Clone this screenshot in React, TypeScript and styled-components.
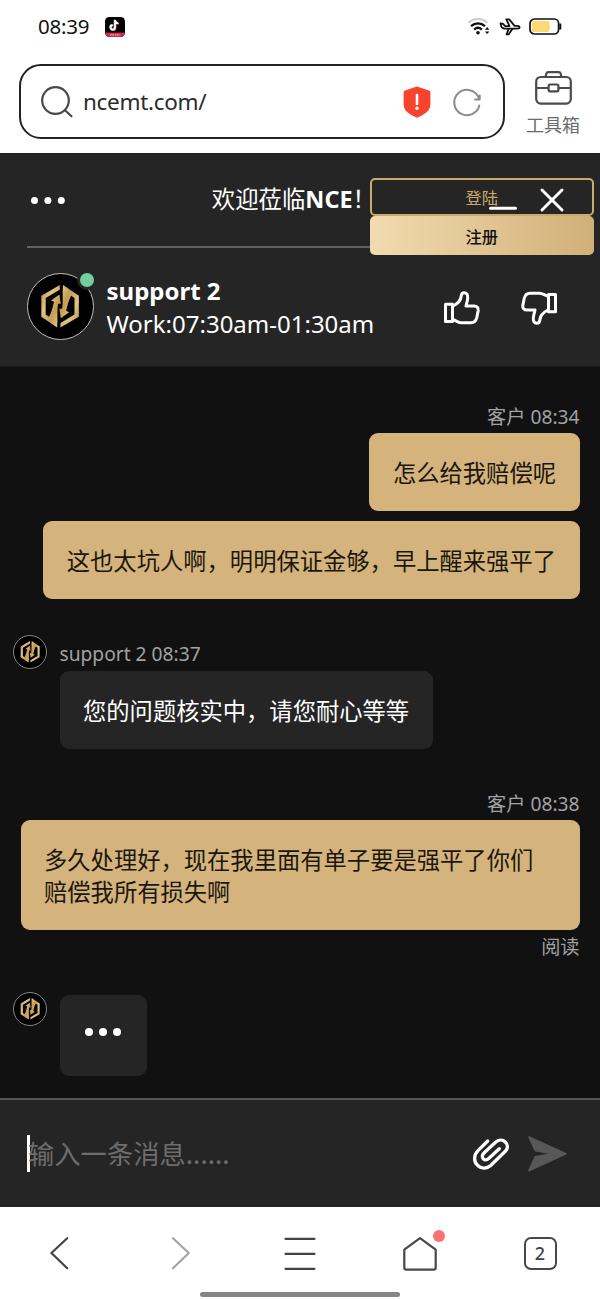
import React from "react";
import styled, { createGlobalStyle } from "styled-components";

const GOLD = "#d4b47c";
const PANEL = "#252525";

const Global = createGlobalStyle`
  * { box-sizing: border-box; }
  body { margin: 0; background: #fff; font-family: "Noto Sans", "Noto Sans CJK SC", sans-serif; }
  svg { display: block; flex: none; overflow: visible; }
`;

const Page = styled.div`
  width: 600px;
  height: 1300px;
  display: flex;
  flex-direction: column;
  background: #fff;
  overflow: hidden;
`;

const StatusBar = styled.div`
  height: 53px;
  padding: 0 38px;
  display: flex;
  align-items: center;
  justify-content: space-between;
`;
const StatusGroup = styled.div<{ $gap: number }>`
  display: flex;
  align-items: center;
  gap: ${(p) => p.$gap}px;
`;
const Clock = styled.span`
  width: 52px;
  font: 400 20.5px/53px "Noto Sans", sans-serif;
  letter-spacing: -0.2px;
  color: #111;
  white-space: nowrap;
`;

const BrowserBar = styled.div`
  height: 101px;
  padding: 11px 19px 15px;
  display: flex;
  align-items: flex-start;
  border-bottom: 1px solid #202020;
`;
const AddressBox = styled.div`
  width: 486px;
  height: 75px;
  padding: 0 22px 0 20px;
  border: 2.5px solid #232323;
  border-radius: 22px;
  display: flex;
  align-items: center;
`;
const Url = styled.span`
  flex: 1;
  margin-left: 10px;
  font: 400 22.5px/70px "Noto Sans", sans-serif;
  letter-spacing: -0.3px;
  color: #2c2c2c;
`;
const Toolbox = styled.div`
  margin-left: 21px;
  width: 54px;
  padding-top: 7px;
  display: flex;
  flex-direction: column;
  align-items: center;
  gap: 6px;
  white-space: nowrap;
  font: 400 18px/26px "Noto Sans CJK SC", sans-serif;
  color: #6c6c6c;
`;

const ChatHeader = styled.header`
  position: relative;
  height: 213px;
  padding: 0 27px;
  background: ${PANEL};
  color: #fff;
  border-bottom: 1px solid #1a1a1a;
`;
const TitleRow = styled.div`
  height: 94px;
  padding-left: 4px;
  display: flex;
  align-items: center;
  border-bottom: 2px solid #626262;
`;
const Title = styled.div`
  margin-left: 147px;
  padding-bottom: 2px;
  font: 400 23.4px/32px "Noto Sans", "Noto Sans CJK SC", sans-serif;
  white-space: nowrap;
  b { font-weight: 700; }
`;
const AgentRow = styled.div`
  display: flex;
  align-items: center;
  padding: 25px 16px 0 0;
`;
const AvatarWrap = styled.div`
  position: relative;
  flex: none;
`;
const AvatarDisc = styled.div<{ $size: number }>`
  width: ${(p) => p.$size}px;
  height: ${(p) => p.$size}px;
  border: 1px solid ${(p) => (p.$size > 40 ? "#bdbdbd" : "#858585")};
  border-radius: 50%;
  background: #000;
  display: flex;
  align-items: center;
  justify-content: center;
  flex: none;
`;
const Online = styled.span`
  position: absolute;
  top: -3px;
  right: -3px;
  width: 20px;
  height: 20px;
  border: 3px solid ${PANEL};
  border-radius: 50%;
  background: #73cf9c;
`;
const AgentText = styled.div`
  flex: 1;
  margin-left: 12.5px;
  font-size: 24px;
  line-height: 33px;
  white-space: nowrap;
`;
const AgentName = styled.div`
  font-weight: 700;
`;
const Votes = styled.div`
  display: flex;
  gap: 41px;
  padding-top: 2px;
`;

const AuthPanel = styled.div`
  position: absolute;
  top: 24px;
  left: 370px;
  width: 223.5px;
  display: flex;
  flex-direction: column;
`;
const AuthButton = styled.button<{ $filled?: boolean }>`
  height: ${(p) => (p.$filled ? 39 : 38)}px;
  padding: 0;
  border: ${(p) => (p.$filled ? "0" : "2px solid #cbaa6c")};
  border-radius: 5px;
  background: ${(p) => (p.$filled ? "linear-gradient(90deg, #f2dbb0, #d0b078)" : PANEL)};
  color: ${(p) => (p.$filled ? "#111" : "#cbaa6c")};
  font: ${(p) => (p.$filled ? 500 : 400)} 16.3px/24px "Noto Sans CJK SC", sans-serif;
`;
const WindowControls = styled.div`
  position: absolute;
  top: 34px;
  left: 489px;
  display: flex;
  gap: 22px;
`;

const Conversation = styled.main`
  height: 732px;
  padding: 37px 20.5px 0 13px;
  background: #111;
  display: flex;
  flex-direction: column;
`;
const Outgoing = styled.section<{ $top?: number }>`
  display: flex;
  flex-direction: column;
  align-items: flex-end;
  margin-top: ${(p) => p.$top ?? 0}px;
`;
const Incoming = styled.section<{ $top: number }>`
  display: flex;
  align-items: flex-start;
  gap: 12.5px;
  margin-top: ${(p) => p.$top}px;
`;
const IncomingBody = styled.div`
  display: flex;
  flex-direction: column;
  align-items: flex-start;
`;
const Meta = styled.div<{ $h?: number; $pad?: number }>`
  height: ${(p) => p.$h ?? 29}px;
  padding-top: ${(p) => p.$pad ?? 0}px;
  line-height: 25px;
  font-size: 19.2px;
  color: #a2a2a2;
  white-space: nowrap;
`;
const Bubble = styled.div<{ $mine?: boolean; $gap?: number }>`
  margin-top: ${(p) => p.$gap ?? 0}px;
  padding: 23px 23.5px;
  border-radius: 9px;
  background: ${(p) => (p.$mine ? GOLD : PANEL)};
  color: ${(p) => (p.$mine ? "#1c170e" : "#fff")};
  font: 400 23.3px/32px "Noto Sans CJK SC", sans-serif;
  white-space: nowrap;
`;
const WideBubble = styled(Bubble)`
  width: 559px;
`;
const TypingBubble = styled(Bubble)`
  width: 87px;
  height: 81px;
  padding: 33px 25px;
`;

const Composer = styled.div`
  height: 109px;
  padding: 0 33px 0 27px;
  background: ${PANEL};
  border-top: 2px solid #555;
  display: flex;
  align-items: center;
`;
const Caret = styled.span`
  width: 3px;
  height: 37px;
  background: #fff;
`;
const Placeholder = styled.span`
  flex: 1;
  margin-left: -2px;
  padding-bottom: 1px;
  font: 400 26.3px/40px "Noto Sans CJK SC", sans-serif;
  color: #6d6d6d;
`;
const ComposerIcons = styled.div`
  display: flex;
  align-items: center;
  gap: 19px;
`;

const BottomNav = styled.nav`
  height: 93px;
  display: flex;
  flex-direction: column;
  align-items: center;
`;
const NavItems = styled.div`
  width: 600px;
  height: 85px;
  padding-top: 8px;
  display: grid;
  grid-template-columns: repeat(5, 120px);
  place-items: center;
`;
const NavItem = styled.div`
  position: relative;
`;
const Badge = styled.span`
  position: absolute;
  top: -7px;
  right: -8px;
  width: 12px;
  height: 12px;
  border-radius: 50%;
  background: #f97272;
`;
const TabCount = styled.div`
  width: 33px;
  height: 33px;
  border: 2px solid #484848;
  border-radius: 7px;
  font: 500 18px/29px "Noto Sans", sans-serif;
  text-align: center;
  color: #444;
`;
const HomeIndicator = styled.div`
  width: 200px;
  height: 5px;
  border-radius: 3px;
  background: #858585;
`;

const LOGO_HALF =
  "M59 0L4 32V95L51 127C54 100 50 80 54 56L62 56L58 28L33 46L42 50C38 66 34 84 27 95L17 88V39L59 14Z";

const Logo = ({ size }: { size: number }) => (
  <svg width={size} height={size * 1.06} viewBox="0 0 120 127">
    <defs>
      <linearGradient id="gold" x1="0" y1="0" x2="1" y2="1">
        <stop offset="0" stopColor="#b98d48" />
        <stop offset="0.35" stopColor="#e3c581" />
        <stop offset="0.65" stopColor="#c59c52" />
        <stop offset="1" stopColor="#edd493" />
      </linearGradient>
    </defs>
    <path d={LOGO_HALF} fill="url(#gold)" />
    <path d={LOGO_HALF} fill="url(#gold)" transform="rotate(180 60 63.5)" />
  </svg>
);

const Avatar = ({ size }: { size: number }) => (
  <AvatarDisc $size={size}>
    <Logo size={size * 0.6} />
  </AvatarDisc>
);

const Dots = ({ r, step }: { r: number; step: number }) => (
  <svg width={step * 2 + r * 2} height={r * 2} fill="#fff">
    {[0, 1, 2].map((i) => (
      <circle key={i} cx={r + i * step} cy={r} r={r} />
    ))}
  </svg>
);

const Thumb = ({ down }: { down?: boolean }) => (
  <svg width="36" height="34" viewBox="0 0 36 34" fill="none" stroke="#fff" strokeWidth="3" strokeLinejoin="round">
    <g transform={down ? "rotate(180 18 17)" : undefined}>
      <path d="M1.5 13.3H8.5V30.5H1.5Z" />
      <path d="M9 15C13 13 16.8 9.5 17.2 5C17.4 2.7 18.3 1.7 20 1.7C22.8 1.7 23.9 3.8 23.7 6.8C23.5 9.8 22.6 12.2 22 15H30C33 15 34.6 17 34.2 19.6L32.8 26.5C32 30 29.8 31.8 26.8 31.8H17.5C14 31.8 12.5 29.5 9 28.8" />
    </g>
  </svg>
);

const NOTE = "M10 3V10.4A2.2 2.2 0 1 1 7.8 8.2M10 3.2C10.2 5.2 11.5 6.3 13.4 6.4";

const MusicApp = () => (
  <svg width="20" height="20" viewBox="0 0 20 20">
    <clipPath id="app">
      <rect width="20" height="20" rx="4.5" />
    </clipPath>
    <g clipPath="url(#app)">
      <rect width="20" height="20" fill="#000" />
      <rect y="15.6" width="20" height="4.4" fill="#c9304c" />
      <path d="M5 17.8H15" stroke="#f3a9b5" strokeWidth="1.2" strokeDasharray="1.6 .8" />
    </g>
    <g fill="none" strokeWidth="1.8">
      <path d={NOTE} stroke="#42dcd6" transform="translate(-.5 -.3)" />
      <path d={NOTE} stroke="#ee3158" transform="translate(.6 .4)" />
      <path d={NOTE} stroke="#fff" />
    </g>
  </svg>
);

const Wifi = () => (
  <svg width="22" height="17" viewBox="0 0 22 17" fill="none" strokeWidth="2">
    <path d="M-.5 4.800C5-.2 13-.2 18.300 4.800" stroke="#ccc" />
    <path d="M2 8.200C6 4.400 12 4.400 16 8.200M5.200 11.600C7.500 9.400 10.500 9.400 12.800 11.600" stroke="#111" strokeWidth="2.300" />
    <circle cx="9" cy="14.700" r="1.800" fill="#111" />
    <path d="M15.800 11.700L18.100 9L20.400 11.700ZM15.800 13.400L18.100 16L20.400 13.400Z" fill="#111" />
  </svg>
);

const Flight = () => (
  <svg width="22" height="18" viewBox="0 0 22 18" fill="none" stroke="#111" strokeWidth="1.8" strokeLinejoin="round">
    <path d="M1.5 5.300L3.700 5.600L6.200 8.100H10.500L7.300 1.300H10.200L15.600 7.800H18.400C21.300 8 21.300 10.500 18.400 10.600H5.200L2.600 9.300Z" />
    <path d="M9.700 10.600L7.600 16.300H9.700L13.700 10.600" />
  </svg>
);

const Battery = () => (
  <svg width="33" height="17" viewBox="0 0 33 17">
    <rect x="1" y="1" width="28.6" height="15" rx="4.5" fill="#fff" stroke="#111" strokeWidth="1.7" />
    <rect x="3" y="3" width="17.6" height="11" rx="2" fill="#fbd973" />
    <path d="M31.3 5.5V11.5" stroke="#111" strokeWidth="2" />
  </svg>
);

const Search = () => (
  <svg width="32" height="32" viewBox="0 0 32 32" fill="none" stroke="#4a4a4a" strokeWidth="2.2" strokeLinecap="round">
    <circle cx="14.5" cy="14.5" r="13.3" />
    <path d="M24 24.3L30.5 30.3" />
  </svg>
);

const Shield = () => (
  <svg width="28" height="32" viewBox="0 0 28 32">
    <path d="M14 .4L26 4.6Q27.4 5.2 27.4 6.8V18.5C27.4 25 21.5 28.6 14 31.7C6.5 28.6 .6 25 .6 18.5V6.8Q.6 5.2 2 4.6Z" fill="#f8432f" />
    <path d="M14 9V18" stroke="#fff" strokeWidth="2.6" strokeLinecap="round" />
    <circle cx="14" cy="22.3" r="1.7" fill="#fff" />
  </svg>
);

const Reload = () => (
  <svg width="28" height="28" viewBox="0 0 28 28" fill="none" stroke="#8c8c8c" strokeWidth="2" strokeLinecap="round" strokeLinejoin="round">
    <path d="M26.3 17.5A12.7 12.7 0 1 1 25 8.2L26.2 11.3M26.7 7.6V11.4H22" />
  </svg>
);

const Briefcase = () => (
  <svg width="37" height="34" viewBox="0 0 37 34" fill="none" stroke="#4b4b4b" strokeWidth="2.2">
    <rect x="1.2" y="6" width="34.6" height="26.6" rx="4.5" />
    <path d="M10.5 6L11.3 2.7Q11.7 1.2 13.3 1.2H23.7Q25.3 1.2 25.7 2.7L26.5 6M1.2 17H13.5M23.5 17H35.8" />
    <rect x="13.6" y="13.5" width="9.8" height="6.8" rx="1.5" />
  </svg>
);

const Clip = () => (
  <svg width="36" height="32" viewBox="0 0 36 32" fill="none" stroke="#fff" strokeWidth="3.3" strokeLinecap="round">
    <path d="M14.7 3L5 12.7C.5 17.2 .8 23.5 4.2 26.9C7.8 30.8 13.5 31.2 17.7 27.5L32.3 13.3C35.3 10.3 35 6.5 32.3 4C29.5 1.2 25.5 1.5 22.5 4.3L11.2 14.7C8.8 17 9 19.5 10.3 20.8C11.8 22.3 14 22 16 20.2L26.3 10.7" />
  </svg>
);

const Send = () => (
  <svg width="39" height="36" viewBox="0 0 39 36">
    <path d="M1 1L38 17.7L1 34.7L7.3 20.7L24 17.7L7.3 14.7Z" fill="#585858" stroke="#585858" strokeWidth="1.6" strokeLinejoin="round" />
  </svg>
);

const Chevron = ({ right }: { right?: boolean }) => (
  <svg width="18" height="33" viewBox="0 0 18 33" fill="none" stroke={right ? "#a3a3a3" : "#444"} strokeWidth="2.2" strokeLinecap="round" strokeLinejoin="round">
    <path d={right ? "M2 1.2L17.8 16L2 31.2" : "M16.2 1.2L.4 16L16.2 31.2"} />
  </svg>
);

const Menu = () => (
  <svg width="32" height="34" viewBox="0 0 32 34" stroke="#444" strokeWidth="2.2" strokeLinecap="round">
    <path d="M1.5 1.8H30.5M1.5 16.8H30.5M1.5 31.8H30.5" />
  </svg>
);

const Home = () => (
  <svg width="34" height="34" viewBox="0 0 34 34" fill="none" stroke="#484848" strokeWidth="2.2" strokeLinejoin="round">
    <path d="M17 1.2L32.7 12.7V30.8Q32.7 32.7 30.8 32.7H3.2Q1.3 32.7 1.3 30.8V12.7Z" />
  </svg>
);

export default function App() {
  return (
    <Page>
      <Global />
      <StatusBar>
        <StatusGroup $gap={15}>
          <Clock>08:39</Clock>
          <MusicApp />
        </StatusGroup>
        <StatusGroup $gap={8}>
          <Wifi />
          <Flight />
          <Battery />
        </StatusGroup>
      </StatusBar>

      <BrowserBar>
        <AddressBox>
          <Search />
          <Url>ncemt.com/</Url>
          <StatusGroup $gap={22}>
            <Shield />
            <Reload />
          </StatusGroup>
        </AddressBox>
        <Toolbox>
          <Briefcase />
          工具箱
        </Toolbox>
      </BrowserBar>

      <ChatHeader>
        <TitleRow>
          <Dots r={3.5} step={13.4} />
          <Title>
            欢迎莅临<b>NCE</b>！
          </Title>
        </TitleRow>
        <AgentRow>
          <AvatarWrap>
            <Avatar size={67} />
            <Online />
          </AvatarWrap>
          <AgentText>
            <AgentName>support 2</AgentName>
            <div>Work:07:30am-01:30am</div>
          </AgentText>
          <Votes>
            <Thumb />
            <Thumb down />
          </Votes>
        </AgentRow>
        <AuthPanel>
          <AuthButton>登陆</AuthButton>
          <AuthButton $filled>注册</AuthButton>
        </AuthPanel>
        <WindowControls>
          <svg width="29" height="24" stroke="#fff" strokeWidth="3" strokeLinecap="round">
            <path d="M1.500 20.300H26.500" />
          </svg>
          <svg width="24" height="24" stroke="#fff" strokeWidth="3" strokeLinecap="round">
            <path d="M2 2L22 22M22 2L2 22" />
          </svg>
        </WindowControls>
      </ChatHeader>

      <Conversation>
        <Outgoing>
          <Meta>客户 08:34</Meta>
          <Bubble $mine>怎么给我赔偿呢</Bubble>
          <Bubble $mine $gap={10}>这也太坑人啊，明明保证金够，早上醒来强平了</Bubble>
        </Outgoing>
        <Incoming $top={36}>
          <Avatar size={34} />
          <IncomingBody>
            <Meta $h={36} $pad={6}>support 2 08:37</Meta>
            <Bubble>您的问题核实中，请您耐心等等</Bubble>
          </IncomingBody>
        </Incoming>
        <Outgoing $top={42}>
          <Meta>客户 08:38</Meta>
          <WideBubble $mine>
            多久处理好，现在我里面有单子要是强平了你们
            <br />
            赔偿我所有损失啊
          </WideBubble>
          <Meta $pad={4}>阅读</Meta>
        </Outgoing>
        <Incoming $top={33}>
          <Avatar size={34} />
          <TypingBubble $gap={3}>
            <Dots r={4} step={14} />
          </TypingBubble>
        </Incoming>
      </Conversation>

      <Composer>
        <Caret />
        <Placeholder>输入一条消息......</Placeholder>
        <ComposerIcons>
          <Clip />
          <Send />
        </ComposerIcons>
      </Composer>

      <BottomNav>
        <NavItems>
          <NavItem><Chevron /></NavItem>
          <NavItem><Chevron right /></NavItem>
          <NavItem><Menu /></NavItem>
          <NavItem>
            <Home />
            <Badge />
          </NavItem>
          <NavItem><TabCount>2</TabCount></NavItem>
        </NavItems>
        <HomeIndicator />
      </BottomNav>
    </Page>
  );
}
